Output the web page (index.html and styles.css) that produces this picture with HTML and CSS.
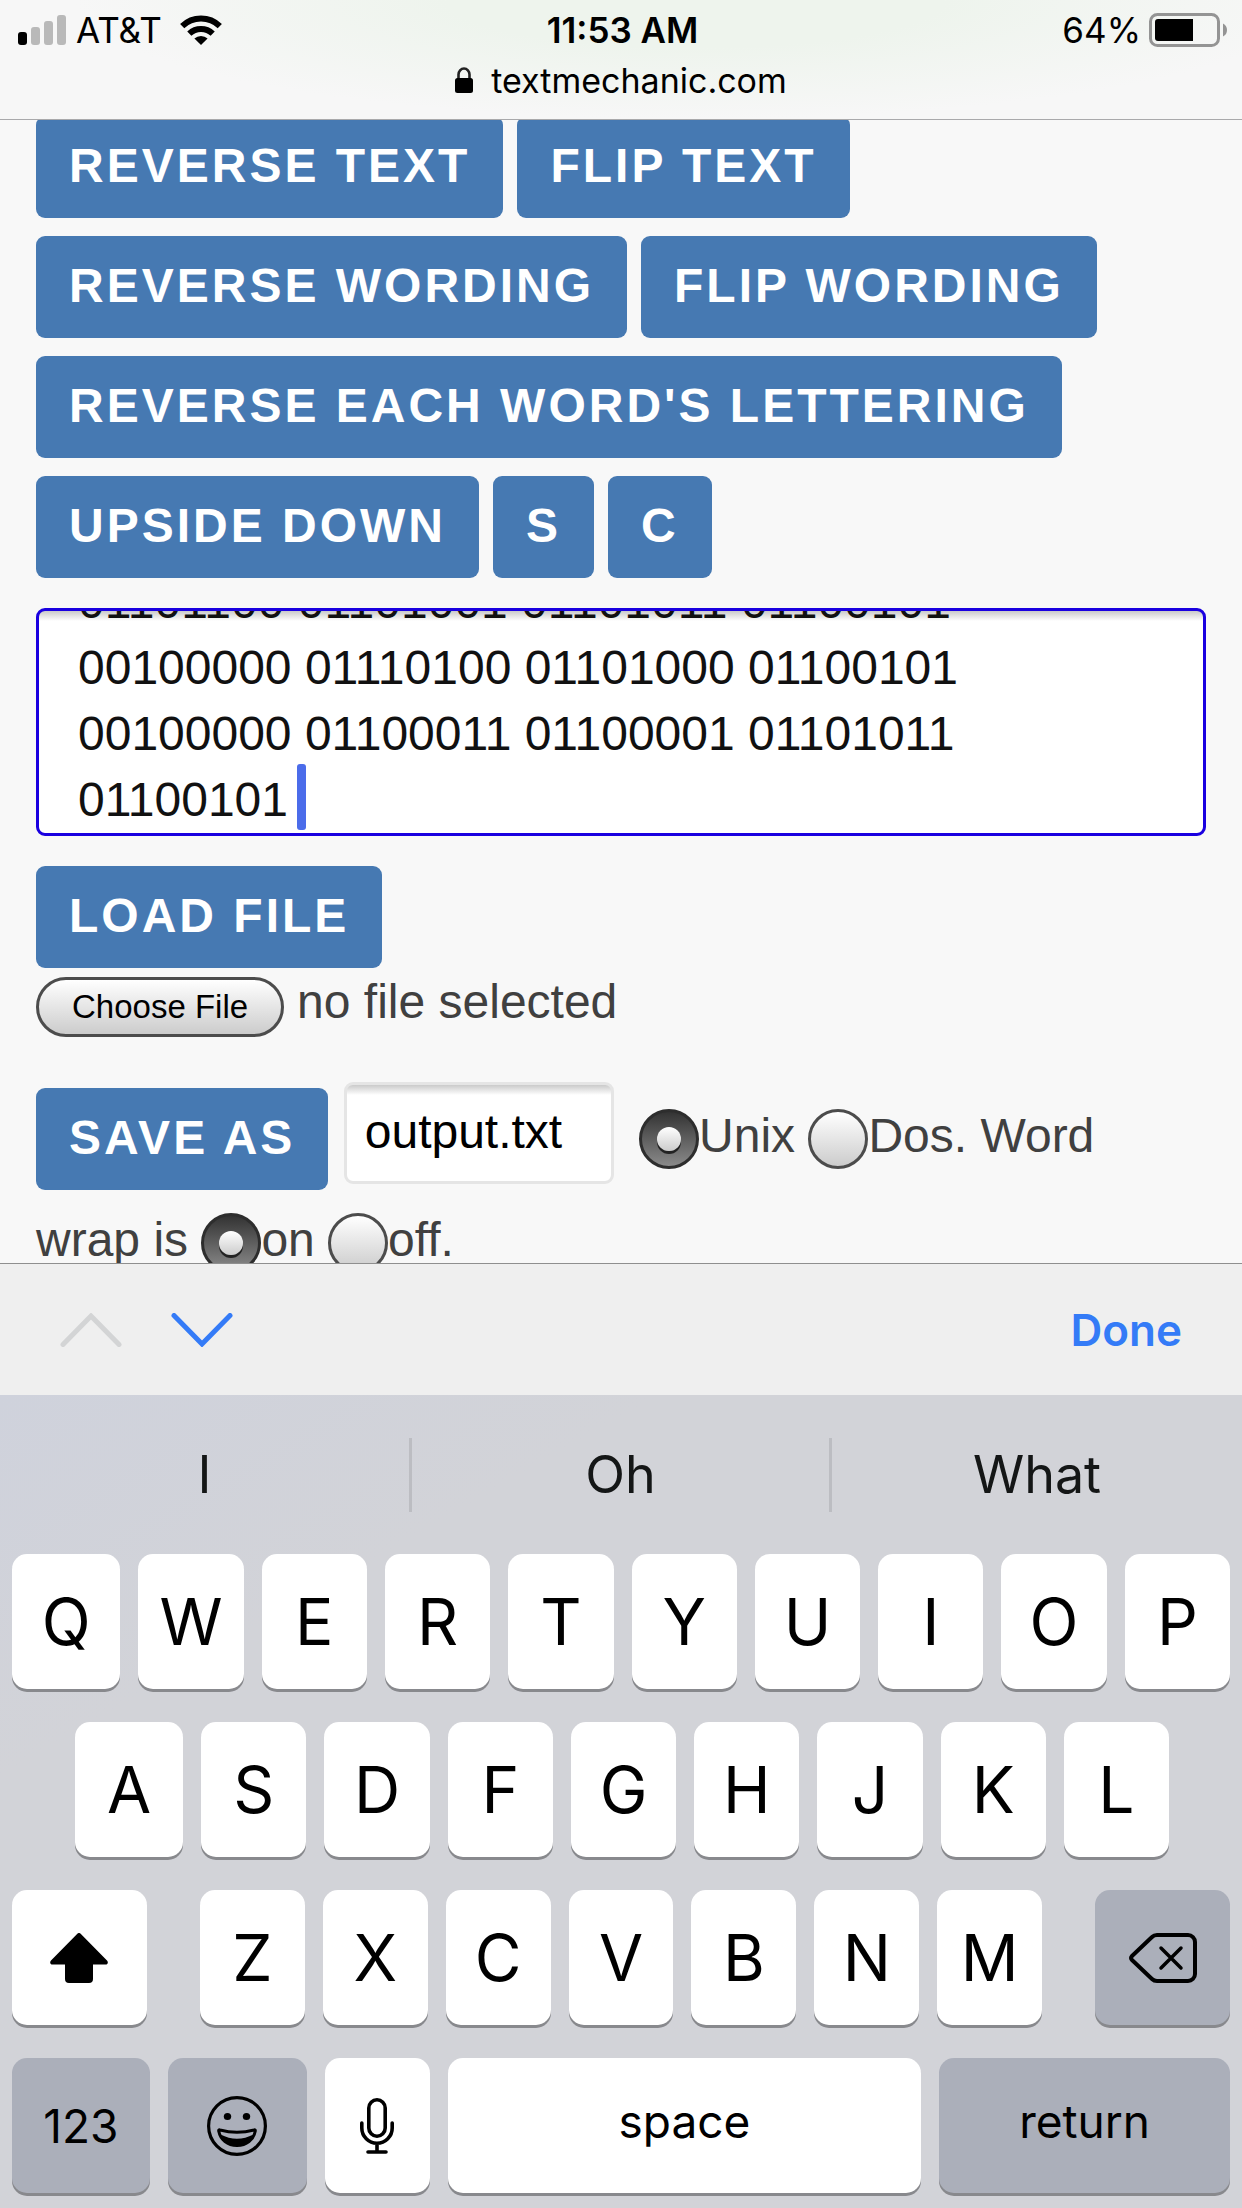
FILE: index.html
```html
<!DOCTYPE html>
<html lang="en">
<head>
<meta charset="utf-8">
<meta name="viewport" content="width=device-width, initial-scale=1">
<title>textmechanic.com</title>
<link rel="stylesheet" href="styles.css">
</head>
<body>
<header class="topbar">
  <div class="status">
    <div class="status-left">
      <svg width="48" height="30" viewBox="0 0 48 30" aria-hidden="true">
        <rect x="0" y="17" width="9" height="13" rx="3" fill="#000"/>
        <rect x="13" y="12" width="9" height="18" rx="3" fill="#b9b9b9"/>
        <rect x="26" y="6" width="9" height="24" rx="3" fill="#b9b9b9"/>
        <rect x="39" y="0" width="9" height="30" rx="3" fill="#b9b9b9"/>
      </svg>
      <span>AT&amp;T</span>
      <svg class="wifi" width="42" height="30" viewBox="0 0 42 30" aria-hidden="true">
        <g fill="none" stroke="#000" stroke-width="6">
          <path d="M2.2 11.2a27 27 0 0 1 37.6 0"/>
          <path d="M9.3 18.6a17 17 0 0 1 23.4 0"/>
        </g>
        <path d="M21 30l-6.6-6.4a9.5 9.5 0 0 1 13.2 0z"/>
      </svg>
    </div>
    <span class="clock">11:53 AM</span>
    <div class="status-right">
      <span>64%</span>
      <svg width="78" height="34" viewBox="0 0 78 34" aria-hidden="true">
        <rect x="1.5" y="1.5" width="68" height="31" rx="7" fill="none" stroke="#949494" stroke-width="3"/>
        <path d="M9 6h35v22H9a3 3 0 0 1-3-3V9a3 3 0 0 1 3-3z"/>
        <path d="M74 10.500q4 2 4 6.500t-4 6.500z" fill="#949494"/>
      </svg>
    </div>
  </div>
  <div class="address">
    <svg width="18" height="26" viewBox="0 0 18 26" aria-hidden="true">
      <path d="M3.500 13V7.500a5.500 6 0 0 1 11 0V13" fill="none" stroke="#222" stroke-width="2.600"/>
      <rect x="0" y="11" width="18" height="15" rx="2.500"/>
    </svg>
    <span>textmechanic.com</span>
  </div>
</header>

<main class="page">
  <div class="tools">
    <div class="tool-row"><button class="btn" type="button">REVERSE TEXT</button><button class="btn" type="button">FLIP TEXT</button></div>
    <div class="tool-row"><button class="btn" type="button">REVERSE WORDING</button><button class="btn" type="button">FLIP WORDING</button></div>
    <div class="tool-row"><button class="btn" type="button">REVERSE EACH WORD'S LETTERING</button></div>
    <div class="tool-row"><button class="btn" type="button">UPSIDE DOWN</button><button class="btn" type="button">S</button><button class="btn" type="button">C</button></div>
  </div>

  <div class="editor">
    <textarea class="editor-text" id="editor" aria-label="Text" spellcheck="false">01101100 01101001 01101011 01100101 00100000 01110100 01101000 01100101 00100000 01100011 01100001 01101011 01100101 </textarea>
    <span class="caret"></span>
  </div>

  <button class="btn" type="button">LOAD FILE</button>
  <div class="file-row">
    <input class="file-input" type="file" id="file">
    <label class="file-button" for="file">Choose File</label>
    <span>no file selected</span>
  </div>

  <p class="save">
    <button class="btn" type="button">SAVE AS</button>
    <input class="filename" type="text" value="output.txt" aria-label="File name">
    <label><input class="radio" type="radio" name="format" checked>Unix</label>
    <label><input class="radio" type="radio" name="format">Dos.</label> Word wrap is
    <label><input class="radio" type="radio" name="wrap" checked>on</label>
    <label><input class="radio" type="radio" name="wrap">off.</label>
  </p>
</main>

<section class="assist">
  <button class="nav" type="button" aria-label="Previous field" disabled>
    <svg width="62" height="34" viewBox="0 0 62 34"><path d="M3 31.500L31 3l28 28.500" fill="none" stroke="#d3d4d5" stroke-width="5" stroke-linecap="round"/></svg>
  </button>
  <button class="nav" type="button" aria-label="Next field">
    <svg width="62" height="34" viewBox="0 0 62 34"><path d="M3 2.500L31 31l28-28.500" fill="none" stroke="#347bf7" stroke-width="5" stroke-linecap="round"/></svg>
  </button>
  <button class="done" type="button">Done</button>
</section>

<section class="keyboard">
  <div class="suggestions">
    <button type="button">I</button>
    <button class="middle" type="button">Oh</button>
    <button type="button">What</button>
  </div>
  <div class="keys">
    <div class="key-row">
      <button class="key first" type="button">Q</button><button class="key" type="button">W</button><button class="key" type="button">E</button><button class="key" type="button">R</button><button class="key" type="button">T</button><button class="key" type="button">Y</button><button class="key" type="button">U</button><button class="key" type="button">I</button><button class="key" type="button">O</button><button class="key" type="button">P</button>
    </div>
    <div class="key-row inset">
      <button class="key first" type="button">A</button><button class="key" type="button">S</button><button class="key" type="button">D</button><button class="key" type="button">F</button><button class="key" type="button">G</button><button class="key" type="button">H</button><button class="key" type="button">J</button><button class="key" type="button">K</button><button class="key" type="button">L</button>
    </div>
    <div class="shift-row">
      <button class="key" type="button" aria-label="Shift">
        <svg width="58" height="50" viewBox="0 0 58 50"><path d="M27.600.6a2 2 0 0 1 2.800 0L57 27.500c1.600 1.800.8 4-1.500 4H43V46a4 4 0 0 1-4 4H19a4 4 0 0 1-4-4V31.500H2.500c-2.300 0-3.100-2.200-1.500-4z"/></svg>
      </button>
      <div class="key-row">
        <button class="key" type="button">Z</button><button class="key" type="button">X</button><button class="key" type="button">C</button><button class="key" type="button">V</button><button class="key" type="button">B</button><button class="key" type="button">N</button><button class="key" type="button">M</button>
      </div>
      <button class="key dark" type="button" aria-label="Delete">
        <svg width="68" height="50" viewBox="0 0 68 50" fill="none" stroke="#000" stroke-width="4" stroke-linecap="round" stroke-linejoin="round"><path d="M28 2h31a7 7 0 0 1 7 7v32a7 7 0 0 1-7 7H28q-3 0-5-2L3 27q-2-2 0-4L23 4q2-2 5-2z"/><path d="M32 15l20 20M52 15L32 35" stroke-width="3.500"/></svg>
      </button>
    </div>
    <div class="bottom-row">
      <button class="key dark small" type="button">123</button>
      <button class="key dark" type="button" aria-label="Emoji">
        <svg width="60" height="60" viewBox="0 0 60 60"><circle cx="30" cy="30" r="28.400" fill="none" stroke="#000" stroke-width="3.200"/><ellipse cx="20.500" cy="20.500" rx="3.700" ry="3.500"/><ellipse cx="39.500" cy="20.500" rx="3.700" ry="3.500"/><path d="M13 34q-1.500-.5-1.300 1C13.500 44 20.500 49.500 30 49.500S46.500 44 48.300 35q.2-1.500-1.300-1-17 4.500-34 0z" fill="none" stroke="#000" stroke-width="3"/><path d="M13.500 38.500Q30 47 46.500 38.500 42 49.500 30 49.500T13.500 38.500z"/></svg>
      </button>
      <button class="key" type="button" aria-label="Dictate">
        <svg width="34" height="56" viewBox="0 0 34 56" fill="none" stroke="#000" stroke-width="3.600" stroke-linecap="round"><rect x="8.800" y="1.800" width="16.400" height="36.400" rx="8.200"/><path d="M1.800 25v5a15.200 15.200 0 0 0 30.400 0v-5M17 45.500V53M8 54h18"/></svg>
      </button>
      <button class="key small word" type="button">space</button>
      <button class="key dark small word" type="button">return</button>
    </div>
  </div>
</section>
<script src="script.js"></script>
</body>
</html>
```
FILE: styles.css
```css
* { box-sizing: border-box; }

body {
  margin: 0;
  height: 100vh;
  display: flex;
  flex-direction: column;
  overflow: hidden;
  background: #f8f8f8;
  color: #404040;
  font-family: "Liberation Sans", Arial, sans-serif;
  font-size: 48px;
}

button, input, textarea { font: inherit; margin: 0; }
button { border: 0; cursor: pointer; }
svg { display: block; flex: none; }

/* Status and address */
.topbar {
  position: relative;
  z-index: 1;
  height: 120px;
  flex: none;
  color: #000;
  font-family: Inter, sans-serif;
  background: radial-gradient(ellipse 50% 100% at 56% 0, #eef4ed 40%, #f7f7f7 100%) #f7f7f7;
  border-bottom: 1px solid #a9a9ab;
}
.status {
  display: grid;
  grid-template-columns: 1fr auto 1fr;
  align-items: center;
  height: 60px;
  padding: 0 15px 0 18px;
  font-size: 35px;
}
.status-left, .status-right { display: flex; align-items: center; gap: 10px; }
.status-right { justify-content: flex-end; gap: 8px; }
.wifi { margin-left: 8px; }
.clock { font-weight: 600; }
.address {
  display: flex;
  justify-content: center;
  align-items: center;
  gap: 18px;
  height: 40px;
  font-size: 34px;
}

/* Web page */
.page {
  flex: 1 1 0;
  min-height: 0;
  overflow: hidden;
  margin-top: -4px;
  padding: 0 36px;
}
.tools { display: flex; flex-direction: column; gap: 18px; }
.tool-row { display: flex; gap: 14px; }
.btn {
  padding: 22px 33px 25px;
  border-radius: 9px;
  background: #4679b2;
  color: #fff;
  font-weight: 700;
  line-height: 55px;
  letter-spacing: 3px;
  white-space: nowrap;
}

.editor { position: relative; margin: 30px 0; }
.editor-text {
  display: block;
  width: 100%;
  height: 228px;
  padding: 0 39px;
  border: 3px solid #1a00e0;
  border-radius: 9px;
  outline: 0;
  resize: none;
  overflow: hidden;
  background: linear-gradient(#cacaca, #fff 10px);
  color: #111;
  line-height: 66px;
}
.caret {
  position: absolute;
  left: 261px;
  top: 156px;
  width: 9px;
  height: 66px;
  border-radius: 3px;
  background: #4b6cea;
}

.file-row { display: flex; align-items: baseline; gap: 13px; margin-top: 7px; line-height: 54px; }
.file-input { position: absolute; width: 1px; height: 1px; opacity: 0; }
.file-button {
  padding: 0 33px;
  border: 3px solid #4c4c4c;
  border-radius: 30px;
  background: linear-gradient(#fff, #ccc);
  color: #000;
  font-size: 33px;
}

.save { margin: 45px 0 0; line-height: 88px; }
.save .btn { margin-right: 2px; vertical-align: middle; }
.filename {
  width: 270px;
  height: 102px;
  margin: 0 12px 12px 0;
  padding: 0 18px 3px;
  border: 3px solid #e5e5e5;
  border-radius: 9px;
  background: linear-gradient(#cacaca, #fff 10px);
  color: #000;
  vertical-align: middle;
}
.radio {
  appearance: none;
  display: inline-grid;
  place-items: center;
  width: 60px;
  height: 60px;
  border: 3px solid #4c4c4c;
  border-radius: 50%;
  background: linear-gradient(#fff, #ccc);
  vertical-align: middle;
}
.radio:checked { border-color: #2d2d2d; background: linear-gradient(#333, #8a8a8a); }
.radio:checked::before {
  content: "";
  width: 24px;
  height: 24px;
  border-radius: 50%;
  background: linear-gradient(#fff, #ccc);
  box-shadow: 0 3px 0 #222;
}

/* Form assistant bar */
.assist {
  display: flex;
  align-items: center;
  gap: 49px;
  flex: none;
  height: 132px;
  padding: 0 60px;
  border-top: 1px solid #8f8f8f;
  background: #efefef;
}
.nav { padding: 0; background: none; }
.done {
  margin-left: auto;
  padding: 0;
  background: none;
  color: #347bf7;
  font-family: Inter, sans-serif;
  font-size: 44px;
  font-weight: 600;
}

/* Keyboard */
.keyboard {
  flex: none;
  background: linear-gradient(150deg, #cfd2dc 0, #d2d3d8 25%);
  font-family: Inter, sans-serif;
}
.suggestions {
  display: grid;
  grid-template-columns: 409fr 423fr 410fr;
  align-items: center;
  height: 159px;
}
.suggestions button { height: 74px; padding: 0; background: none; color: #141616; font-size: 52px; }
.suggestions .middle { border: solid #bcbdc2; border-width: 0 3px; }
.keys { display: grid; gap: 33px; padding: 0 12px 15px; }
.key-row { display: flex; gap: 18px; }
.inset { padding: 0 61px 0 63px; }
.shift-row { display: grid; grid-template-columns: 135fr 843fr 135fr; gap: 53px; }
.bottom-row { display: grid; grid-template-columns: 138fr 139fr 105fr 474fr 291fr; gap: 18px; }
.key {
  display: flex;
  flex: 35 1 0;
  align-items: center;
  justify-content: center;
  min-width: 0;
  height: 135px;
  padding: 0;
  border-radius: 15px;
  background: #fff;
  box-shadow: 0 3px 0 #88898d;
  color: #000;
  font-size: 64px;
}
.first { flex-grow: 36; }
.dark { background: #abafba; }
.small { font-size: 46px; }
.word { padding-bottom: 9px; }
```
FILE: script.js
```js
// Keep the end of the text, where the caret is, in view.
const editor = document.getElementById("editor");
editor.scrollTop = editor.scrollHeight;
```
